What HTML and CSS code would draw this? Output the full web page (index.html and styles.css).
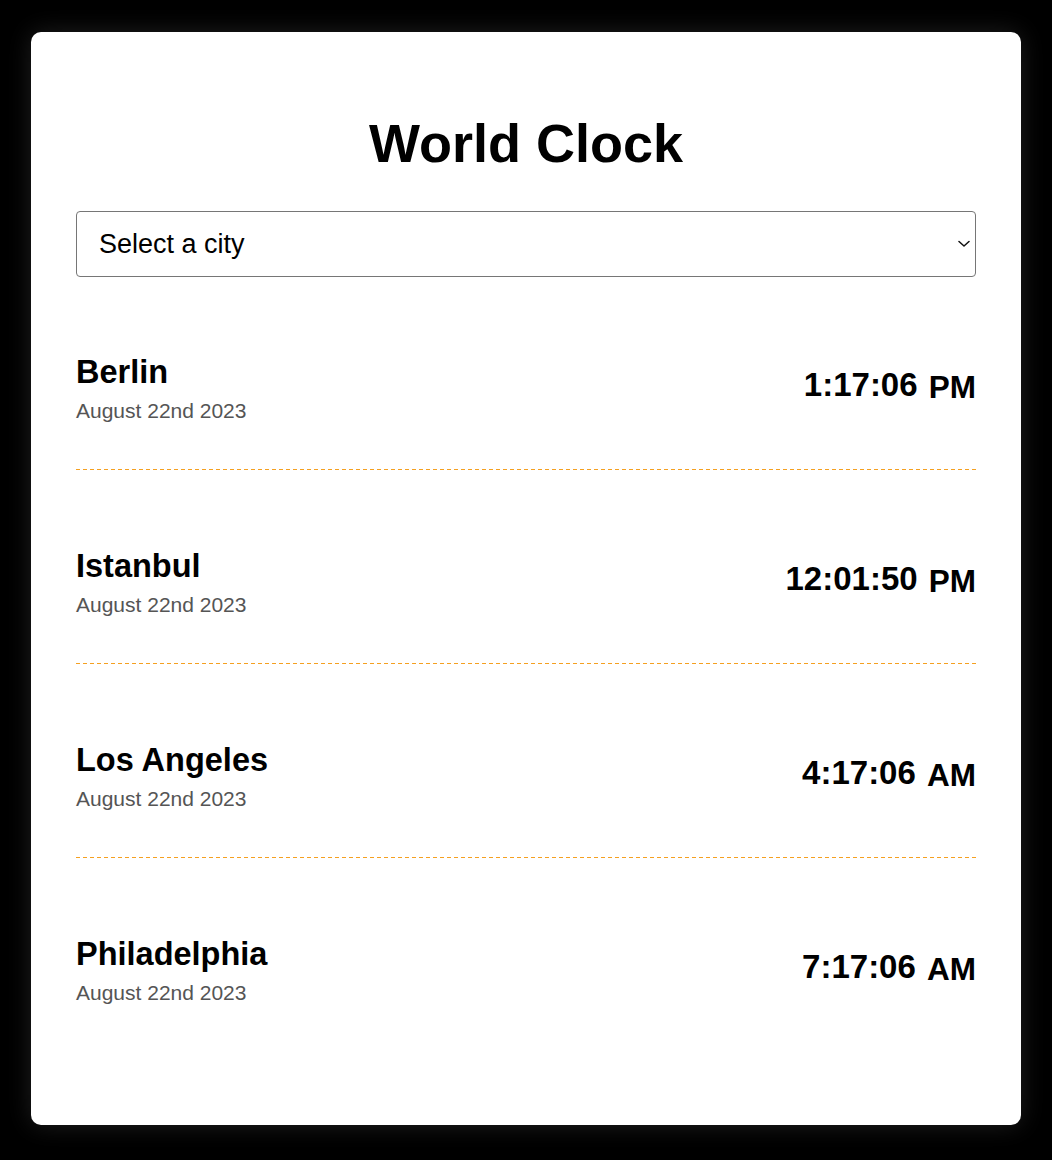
FILE: index.html
```html
<!DOCTYPE html>
<html lang="en">
<head>
<meta charset="utf-8">
<title>World Clock</title>
<link rel="stylesheet" href="styles.css">
</head>
<body>
<div class="card">
  <h1 class="title">World Clock</h1>
  <div class="select-wrap">
    <select class="city-select">
      <option>Select a city</option>
      <option>Berlin</option>
      <option>Istanbul</option>
      <option>Los Angeles</option>
      <option>Philadelphia</option>
    </select>
    <svg class="chevron" width="12" height="8" viewBox="0 0 12 8"><path d="M1 1.5 L6 6 L11 1.5" fill="none" stroke="#111" stroke-width="1.5" stroke-linecap="round" stroke-linejoin="round"/></svg>
  </div>
  <div class="cities">
    <div class="city">
      <div class="info">
        <div class="name">Berlin</div>
        <div class="date">August 22nd 2023</div>
      </div>
      <div class="time">1:17:06 <span class="ampm">PM</span></div>
    </div>
    <div class="city">
      <div class="info">
        <div class="name">Istanbul</div>
        <div class="date">August 22nd 2023</div>
      </div>
      <div class="time">12:01:50 <span class="ampm">PM</span></div>
    </div>
    <div class="city">
      <div class="info">
        <div class="name">Los Angeles</div>
        <div class="date">August 22nd 2023</div>
      </div>
      <div class="time">4:17:06 <span class="ampm">AM</span></div>
    </div>
    <div class="city">
      <div class="info">
        <div class="name">Philadelphia</div>
        <div class="date">August 22nd 2023</div>
      </div>
      <div class="time">7:17:06 <span class="ampm">AM</span></div>
    </div>
  </div>
</div>
</body>
</html>
```

FILE: styles.css
```css
html, body {
  margin: 0;
  background: #000;
}
body {
  padding: 32px 31px 35px;
  font-family: "Liberation Sans", Arial, Helvetica, sans-serif;
  color: #000;
}
.card {
  background: #fff;
  border-radius: 10px;
  padding: 80px 45px 73px;
  box-shadow: 0 0 24px rgba(90, 90, 90, 0.35);
}
.title {
  margin: 0 0 37px;
  font-size: 54px;
  line-height: 62px;
  font-weight: 700;
  text-align: center;
}
.select-wrap {
  position: relative;
  margin-bottom: -1px;
}
.city-select {
  display: block;
  width: 100%;
  height: 66px;
  box-sizing: border-box;
  -webkit-appearance: none;
  appearance: none;
  background: #fff;
  border: 1px solid #767676;
  border-radius: 4px;
  padding: 0 22px;
  font-family: "Liberation Sans", Arial, sans-serif;
  font-size: 27px;
  color: #000;
  outline: none;
}
.chevron {
  position: absolute;
  right: 6px;
  top: 29px;
  pointer-events: none;
}
.city {
  display: flex;
  justify-content: space-between;
  align-items: center;
  padding: 78px 0 47px;
  background-image: repeating-linear-gradient(to right, #f5a020 0, #f5a020 4px, transparent 4px, transparent 7px);
  background-size: 100% 1px;
  background-position: left bottom;
  background-repeat: no-repeat;
}
.city:last-child {
  background-image: none;
}
.name {
  font-size: 32.5px;
  font-weight: 700;
  line-height: 37px;
}
.date {
  margin-top: 8px;
  font-size: 21px;
  line-height: 24px;
  color: #555;
}
.time {
  font-size: 33px;
  font-weight: 700;
  line-height: 38px;
  margin-bottom: 6px;
  white-space: nowrap;
}
.ampm {
  font-size: 31.5px;
  vertical-align: -2px;
  margin-left: 2px;
}
```
